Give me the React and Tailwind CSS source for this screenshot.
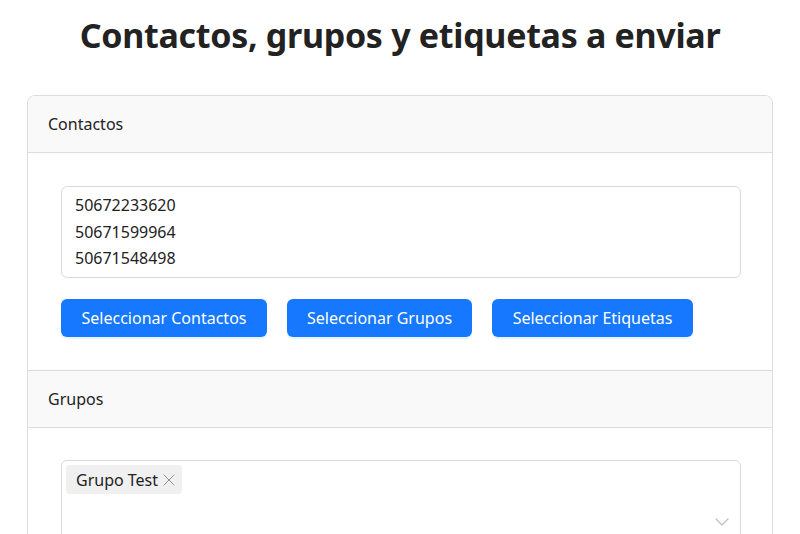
import { X, ChevronDown } from 'lucide-react'

const font = { fontFamily: '"Noto Sans", "Open Sans", sans-serif' }

function SectionHeader({ children }) {
  return (
    <div className="h-[57px] flex items-center px-5 bg-[#f9f9f9] border-b border-[#dcdcdc] text-[16px] text-[#222]">
      {children}
    </div>
  )
}

function BlueButton({ children, w }) {
  return (
    <button className={`h-[38px] ${w} rounded-md bg-[#1677ff] text-white text-[16px] shadow-[0_2px_0_rgba(5,145,255,0.1)]`}>
      {children}
    </button>
  )
}

export default function App() {
  return (
    <div className="h-screen overflow-hidden bg-white text-[#222]" style={font}>
      <h1 className="text-center font-bold text-[34px] leading-[40px] pt-[15px] pb-[40px] tracking-[-0.3px] text-[#222]">
        Contactos, grupos y etiquetas a enviar
      </h1>
      <div className="mx-[27px] border border-[#dcdcdc] rounded-lg overflow-hidden">
        <SectionHeader>Contactos</SectionHeader>
        <div className="pl-[33px] pr-[31px] pt-[33px] pb-[33px] border-b border-[#dcdcdc]">
          <div className="h-[92px] border border-[#d9d9d9] rounded-md px-[13px] py-[5px] text-[16px] leading-[26.5px] text-[#222]">
            <div>50672233620</div>
            <div>50671599964</div>
            <div>50671548498</div>
          </div>
          <div className="flex gap-[20px] mt-[21px]">
            <BlueButton w="w-[206px]">Seleccionar Contactos</BlueButton>
            <BlueButton w="w-[185px]">Seleccionar Grupos</BlueButton>
            <BlueButton w="w-[201px]">Seleccionar Etiquetas</BlueButton>
          </div>
        </div>
        <SectionHeader>Grupos</SectionHeader>
        <div className="pl-[33px] pr-[31px] pt-[32px] pb-[33px]">
          <div className="relative h-[90px] border border-[#d9d9d9] rounded-md p-[4px]">
            <span className="inline-flex items-center h-[29px] rounded bg-[#f0f0f0] pl-[10px] pr-[3px] text-[16px] text-[#222]">
              Grupo Test
              <X className="w-[20px] h-[20px] ml-[1px] text-[#888]" strokeWidth={1.1} />
            </span>
            <ChevronDown className="absolute right-[6px] top-[49px] w-[24px] h-[24px] text-[#bfbfbf]" strokeWidth={1.2} />
          </div>
        </div>
      </div>
    </div>
  )
}
